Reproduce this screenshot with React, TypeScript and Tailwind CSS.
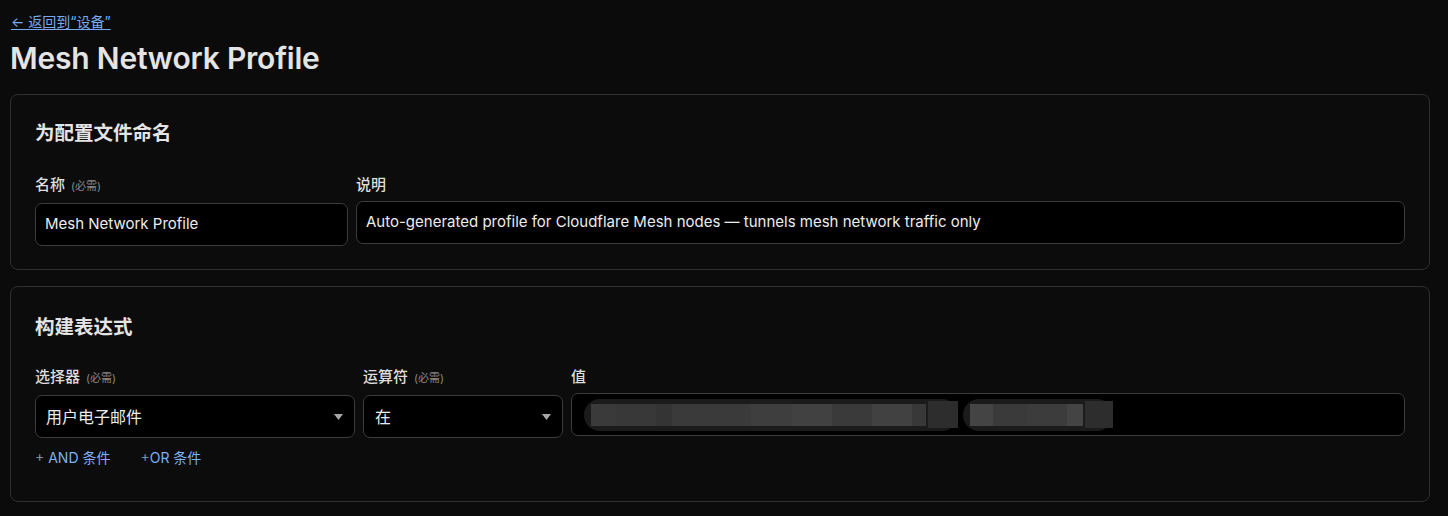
const font = { fontFamily: 'Inter, "Noto Sans CJK SC", sans-serif' }

type Block = { w: number; c: string }

function Chip({ blocks, tail }: { blocks: Block[]; tail: number }) {
  return (
    <div className="flex h-[32px] items-center rounded-full bg-[#1b1b1b] pl-[7px]">
      <div className="flex h-[22px]">
        {blocks.map((b, i) => (
          <div key={i} style={{ width: b.w, backgroundColor: b.c }} />
        ))}
      </div>
      <div className="ml-[2px] h-[27px] bg-[#2d2d2d]" style={{ width: tail }} />
    </div>
  )
}

function Label({ text, required }: { text: string; required?: boolean }) {
  return (
    <div className="mb-[6px] flex items-baseline gap-[6px] text-[15px] leading-[21px] font-medium text-[#dedede]">
      <span>{text}</span>
      {required && <span className="text-[11px] font-normal text-[#8a8a8a]">(必需)</span>}
    </div>
  )
}

function Caret() {
  return (
    <svg width="9" height="6" viewBox="0 0 9 6" className="shrink-0">
      <path d="M0 0 L9 0 L4.5 6 Z" fill="#a8a8a8" />
    </svg>
  )
}

export default function App() {
  return (
    <div style={font} className="min-h-screen bg-[#0b0b0b] pl-[10px] pr-[18px] pt-[9px] pb-[20px] text-[#e6e6e6]">
      <a href="#" className="ml-[1px] text-[14px] leading-[18px] text-[#78aaf2] underline underline-offset-2">
        ← 返回到“设备”
      </a>
      <h1 className="mt-[6px] text-[30px] font-semibold leading-[38px] tracking-[-0.2px] text-[#e4e4e4]">
        Mesh Network Profile
      </h1>

      <section className="mt-[17px] rounded-[8px] border border-[#303030] bg-[#0c0c0c] px-[24px] pt-[24px] pb-[23px]">
        <h2 className="text-[19.5px] font-semibold leading-[28px] text-[#e4e4e4]">为配置文件命名</h2>
        <div className="mt-[27px] flex gap-[8px]">
          <div className="w-[313px] shrink-0">
            <Label text="名称" required />
            <div className="flex h-[43px] items-center rounded-[7px] border border-[#3c3c3c] bg-black px-[9px] text-[15px] text-[#ececec]">
              Mesh Network Profile
            </div>
          </div>
          <div className="flex-1">
            <Label text="说明" />
            <div className="flex h-[43px] items-center rounded-[7px] border border-[#3c3c3c] bg-black px-[9px] text-[15px] text-[#ececec]">
              Auto-generated profile for Cloudflare Mesh nodes — tunnels mesh network traffic only
            </div>
          </div>
        </div>
      </section>

      <section className="mt-[16px] rounded-[8px] border border-[#303030] bg-[#0c0c0c] px-[24px] pt-[26px] pb-[33px]">
        <h2 className="text-[19.5px] font-semibold leading-[28px] text-[#e4e4e4]">构建表达式</h2>
        <div className="mt-[25px] flex gap-[8px]">
          <div className="w-[320px] shrink-0">
            <Label text="选择器" required />
            <div className="flex h-[43px] items-center justify-between rounded-[7px] border border-[#3c3c3c] bg-black pl-[10px] pr-[11px] text-[16px] text-[#ececec]">
              <span>用户电子邮件</span>
              <Caret />
            </div>
          </div>
          <div className="w-[200px] shrink-0">
            <Label text="运算符" required />
            <div className="flex h-[43px] items-center justify-between rounded-[7px] border border-[#3c3c3c] bg-black pl-[11px] pr-[11px] text-[16px] text-[#ececec]">
              <span>在</span>
              <Caret />
            </div>
          </div>
          <div className="flex-1">
            <Label text="值" />
            <div className="flex h-[43px] items-center gap-[5px] rounded-[7px] border border-[#3c3c3c] bg-black pl-[12px]">
              <Chip
                tail={30}
                blocks={[
                  { w: 25, c: '#3a3a3a' },
                  { w: 40, c: '#383838' },
                  { w: 16, c: '#343434' },
                  { w: 79, c: '#3a3a3a' },
                  { w: 41, c: '#3e3e3e' },
                  { w: 40, c: '#414141' },
                  { w: 40, c: '#3a3a3a' },
                  { w: 40, c: '#414141' },
                  { w: 14, c: '#383838' },
                ]}
              />
              <Chip
                tail={28}
                blocks={[
                  { w: 23, c: '#444444' },
                  { w: 34, c: '#3a3a3a' },
                  { w: 40, c: '#3c3c3c' },
                  { w: 16, c: '#444444' },
                ]}
              />
            </div>
          </div>
        </div>
        <div className="mt-[10px] flex gap-[30px] text-[14px] leading-[20px] text-[#7fb0f3]">
          <span>
            <span className="text-[#7d8ea5]">+</span> AND 条件
          </span>
          <span>
            <span className="text-[#7d8ea5]">+</span>OR 条件
          </span>
        </div>
      </section>
    </div>
  )
}
